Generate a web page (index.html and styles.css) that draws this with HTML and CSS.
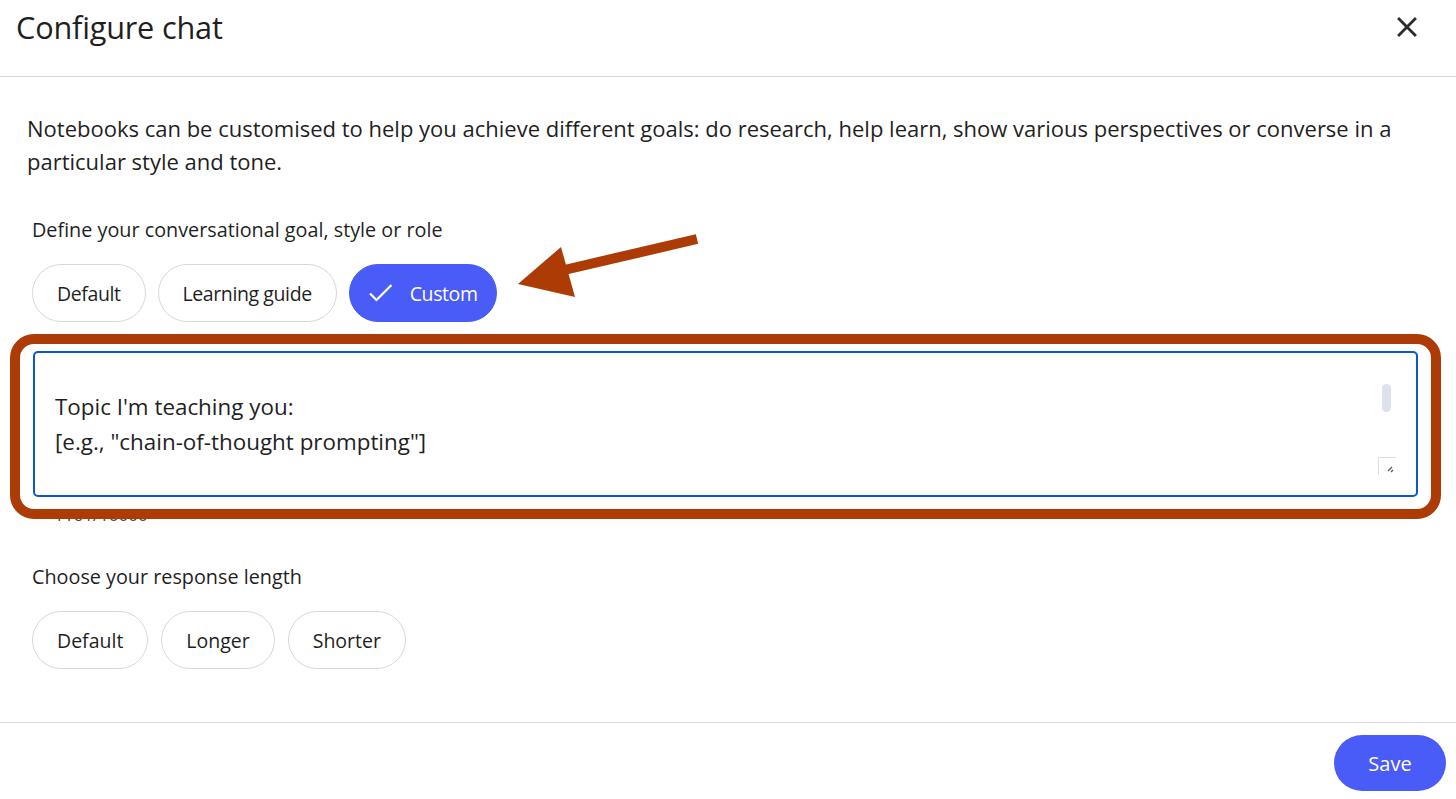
FILE: index.html
```html
<!DOCTYPE html>
<html lang="en">
<head>
<meta charset="utf-8">
<title>Configure chat</title>
<link rel="stylesheet" href="styles.css">
</head>
<body>
<div class="dialog">
  <header class="dlg-header">
    <h1 class="dlg-title">Configure chat</h1>
    <button class="close-btn" aria-label="Close">
      <svg viewBox="0 0 24 24" width="34" height="34"><path d="M19 6.41 17.59 5 12 10.59 6.41 5 5 6.41 10.59 12 5 17.59 6.41 19 12 13.41 17.59 19 19 17.59 13.41 12z" fill="#2b2b2b"/></svg>
    </button>
  </header>
  <main class="dlg-body">
    <p class="intro">Notebooks can be customised to help you achieve different goals: do research, help learn, show various perspectives or converse in a particular style and tone.</p>
    <div class="label">Define your conversational goal, style or role</div>
    <div class="chips">
      <button class="chip">Default</button>
      <button class="chip">Learning guide</button>
      <button class="chip chip-selected">
        <svg class="check" viewBox="0 0 30 30" width="30" height="30"><path d="M4 15.5 10.5 22 25.5 7" fill="none" stroke="#fff" stroke-width="2.2"/></svg>
        Custom
      </button>
    </div>
    <div class="field">
      <div class="textarea">
        <div class="ta-text"><br>Topic I'm teaching you:<br>[e.g., "chain-of-thought prompting"]</div>
        <div class="scroll-thumb"></div>
        <div class="resize-handle">
          <svg viewBox="0 0 16 16" width="16" height="16"><path d="M12 8 8 12 M13 11 11 13" stroke="#555" stroke-width="1.2"/></svg>
        </div>
      </div>
      <div class="counter">1161/10000</div>
    </div>
    <div class="label label-2">Choose your response length</div>
    <div class="chips chips-length">
      <button class="chip">Default</button>
      <button class="chip">Longer</button>
      <button class="chip">Shorter</button>
    </div>
  </main>
  <footer class="dlg-footer">
    <button class="save-btn">Save</button>
  </footer>
  <div class="annot-box"></div>
  <svg class="annot-arrow" width="1456" height="799" viewBox="0 0 1456 799">
    <line x1="560" y1="271" x2="697" y2="239" stroke="#ad3b06" stroke-width="10"/>
    <polygon points="518,284 561,247 575,297" fill="#ad3b06"/>
  </svg>
</div>
</body>
</html>
```
FILE: styles.css
```css
* { box-sizing: border-box; }
html, body { margin: 0; padding: 0; background: #fff; }
body {
  font-family: "Open Sans", Roboto, "Liberation Sans", sans-serif;
  color: #1f1f1f;
  width: 1456px;
  height: 799px;
  overflow: hidden;
}
.dialog { position: relative; width: 1456px; height: 799px; display: flex; flex-direction: column; }
.dlg-header {
  height: 77px;
  border-bottom: 1px solid #d8dae3;
  display: flex;
  justify-content: space-between;
  align-items: flex-start;
  padding: 7px 32px 0 16px;
}
.dlg-title { margin: 0; font-weight: 400; font-size: 30.7px; line-height: 40px; color: #1f1f1f; letter-spacing: -0.2px; }
.close-btn { border: 0; background: none; padding: 0; margin-top: 3px; width: 34px; height: 34px; cursor: pointer; }
.dlg-body { flex: 1; padding: 0 38px 0 27px; }
.intro { margin: 35px 0 0; font-size: 22px; line-height: 33px; }
.label { margin: 40px 0 0 5px; font-size: 19.8px; line-height: 24px; font-weight: 400; }
.label-2 { margin-top: 40px; }
.chips { display: flex; gap: 12px; margin: 22px 0 0 5px; }
.chip {
  height: 58px;
  padding: 0 24px;
  border-radius: 29px;
  border: 1px solid #d6d8e0;
  background: #fff;
  font-family: inherit;
  font-size: 19.5px;
  letter-spacing: -0.4px;
  color: #1f1f1f;
  display: flex;
  align-items: center;
  gap: 13px;
}
.chips-length { gap: 13px; }
.chips-length .chip { letter-spacing: 0; padding: 0 24px; }
.chip-selected { background: #4a5cf7; border-color: #4a5cf7; color: #fff; padding: 0 18px 0 16px; gap: 14px; }
.field { margin: 29px 0 0 6px; }
.textarea {
  position: relative;
  height: 146px;
  border: 2px solid #0b57d0;
  border-radius: 5px;
  padding: 0 40px 0 20px;
}
.ta-text { font-size: 22.4px; line-height: 35px; padding-top: 1px; color: #1f1f1f; }
.scroll-thumb { position: absolute; right: 25px; top: 31px; width: 9px; height: 28px; border-radius: 5px; background: #dde1ec; }
.resize-handle { position: absolute; right: 20px; bottom: 20px; width: 18px; height: 18px; border-top: 1px solid #ddd; border-left: 1px solid #ddd; display: flex; align-items: center; justify-content: center; }
.counter { margin: 8px 0 0 21px; font-size: 17px; line-height: 20px; color: #444; }
.dlg-footer {
  height: 77px;
  border-top: 1px solid #d8dae3;
  display: flex;
  justify-content: flex-end;
  padding: 12px 10px 0 0;
}
.save-btn {
  width: 112px;
  height: 56px;
  border-radius: 28px;
  border: 0;
  background: #4a5cf7;
  color: #fff;
  font-family: inherit;
  font-size: 20px;
}
.annot-box {
  position: absolute;
  left: 10px; top: 334px;
  width: 1431px; height: 185px;
  border: 10px solid #ad3b06;
  border-radius: 24px;
  pointer-events: none;
}
.annot-arrow { position: absolute; left: 0; top: 0; pointer-events: none; }
```
